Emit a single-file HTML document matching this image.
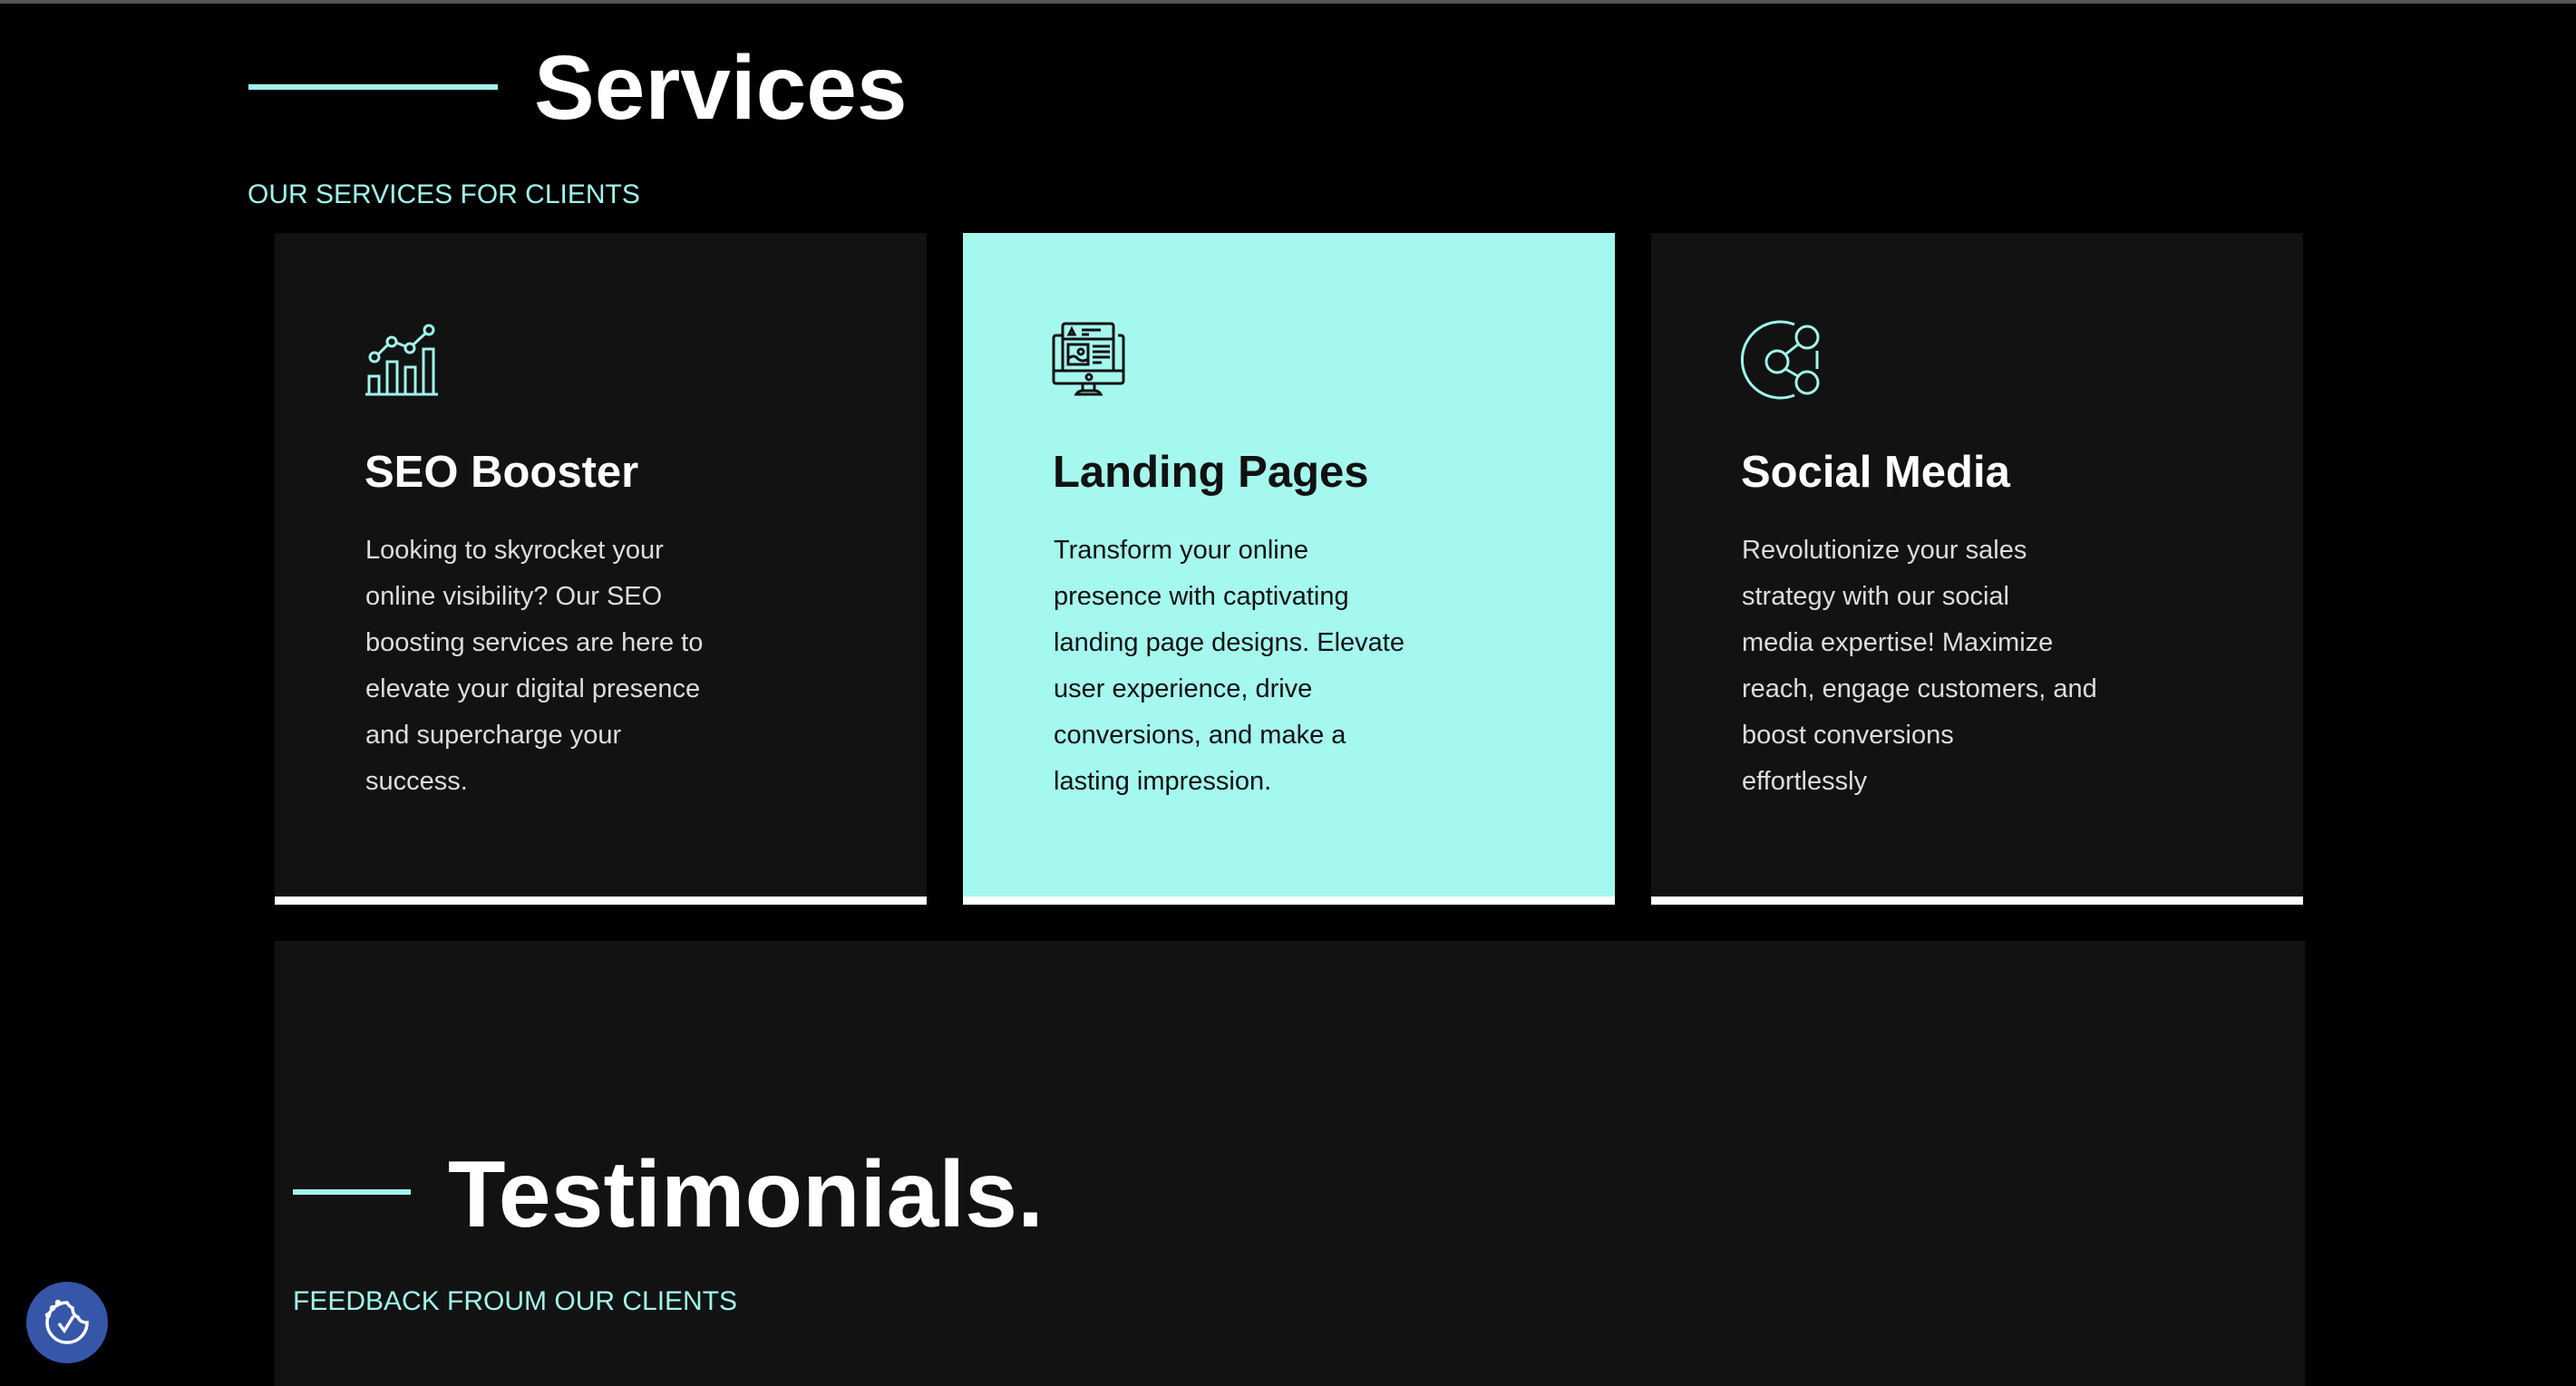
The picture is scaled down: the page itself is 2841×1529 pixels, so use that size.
<!DOCTYPE html>
<html><head><meta charset="utf-8"><style>
*{margin:0;padding:0;box-sizing:border-box}
body{width:2841px;height:1529px;background:#000;overflow:hidden;font-family:"Liberation Sans",sans-serif;position:relative}
.abs{position:absolute}
.line{position:absolute;height:6px;background:#a0f5ec}
h1{position:absolute;color:#fff;font-weight:700;white-space:nowrap;letter-spacing:-1px}
.sub{position:absolute;color:#a0f5ec;font-size:30px;white-space:nowrap}
.card{position:absolute;top:257px;width:719px;height:741px;background:#121212;border-bottom:9px solid #fff}
.card.hl{background:#a5f8ee}
.card svg{position:absolute;left:87px;top:83px;width:120px;height:110px}
.card h2{position:absolute;left:99px;top:234px;font-size:49px;line-height:60px;font-weight:700;color:#fff;white-space:nowrap}
.card.hl h2,.card.hl p{color:#111}
.card p{position:absolute;left:100px;top:325px;font-size:29px;line-height:51px;color:#ddd;white-space:nowrap}
</style></head><body>
<div class="abs" style="left:0;top:0;width:2841px;height:4px;background:#555"></div>
<div class="line" style="left:274px;top:93px;width:275px"></div>
<h1 style="left:589px;top:42px;font-size:100px;line-height:110px;letter-spacing:0">Services</h1>
<div class="sub" style="left:273px;top:198px">OUR SERVICES FOR CLIENTS</div>

<div class="card" style="left:303px">
<svg viewBox="0 0 120 110" fill="none" stroke="#a0f5ec" stroke-width="3">
<path d="M13 95H93"/><rect x="17" y="75" width="11" height="20"/><rect x="37" y="59" width="11" height="36"/><rect x="57" y="65" width="11" height="30"/><rect x="77" y="45" width="11" height="50"/>
<path d="M27 51L38 40M47 38L57 42M66 40L79 28"/>
<circle cx="23" cy="54" r="5"/><circle cx="42" cy="37" r="5"/><circle cx="62" cy="44" r="5"/><circle cx="83" cy="24" r="5"/>
</svg>
<h2>SEO Booster</h2>
<p>Looking to skyrocket your<br>online visibility? Our SEO<br>boosting services are here to<br>elevate your digital presence<br>and supercharge your<br>success.</p>
</div>

<div class="card hl" style="left:1062px">
<svg viewBox="0 0 120 110" fill="none" stroke="#111" stroke-width="3">
<path d="M23 30H16Q13 30 13 33V80Q13 83 16 83H87Q90 83 90 80V33Q90 30 87 30H84"/>
<path d="M13 69H90"/><circle cx="52" cy="76" r="3"/>
<path d="M45 83V92M58 83V92M38 95H65Q63 91 58 91H45Q40 91 38 95Z"/>
<path d="M23 69V20Q23 17 26 17H76Q79 17 79 20V69"/>
<path d="M23 34H79"/><path d="M30 29L33 23L36 29Z"/><path d="M44 24H65M44 29H52"/>
<rect x="29" y="40" width="22" height="22"/><circle cx="43" cy="48" r="3"/><path d="M29 56Q35 50 40 56Q45 60 51 56"/>
<path d="M56 42H75M56 48H75M56 54H75M56 60H66"/>
</svg>
<h2>Landing Pages</h2>
<p>Transform your online<br>presence with captivating<br>landing page designs. Elevate<br>user experience, drive<br>conversions, and make a<br>lasting impression.</p>
</div>

<div class="card" style="left:1821px">
<svg viewBox="0 0 120 110" fill="none" stroke="#a0f5ec" stroke-width="3" style="left:95px">
<path d="M63 18A42 42 0 1 0 63 96"/>
<path d="M88 47V67"/>
<circle cx="77" cy="32" r="12"/><circle cx="44" cy="59" r="12"/><circle cx="77" cy="82" r="12"/>
<path d="M53 51L67 40M53 67L67 75"/>
</svg>
<h2>Social Media</h2>
<p>Revolutionize your sales<br>strategy with our social<br>media expertise! Maximize<br>reach, engage customers, and<br>boost conversions<br>effortlessly</p>
</div>

<div class="abs" style="left:303px;top:1038px;width:2239px;height:491px;background:#121212"></div>
<div class="line" style="left:323px;top:1312px;width:130px"></div>
<h1 style="left:494px;top:1261px;font-size:104px;line-height:115px;letter-spacing:0">Testimonials.</h1>
<div class="sub" style="left:323px;top:1419px;font-size:30px">FEEDBACK FROUM OUR CLIENTS</div>

<div class="abs" style="left:29px;top:1414px;width:90px;height:90px;border-radius:50%;background:#3656a8"></div>
<svg class="abs" style="left:44px;top:1429px" width="60" height="60" viewBox="0 0 60 60" fill="none" stroke="#fff" stroke-width="3.5">
<path d="M30 8A22 22 0 1 0 52 30Q44 30 42 24Q36 22 36 14Q32 12 30 8Z"/>
<path d="M21 31L27 39L37 23"/>
<circle cx="14" cy="14" r="1.5" fill="#fff"/><circle cx="9" cy="22" r="1.5" fill="#fff"/><circle cx="20" cy="8" r="1.5" fill="#fff"/>
</svg>
</body></html>
